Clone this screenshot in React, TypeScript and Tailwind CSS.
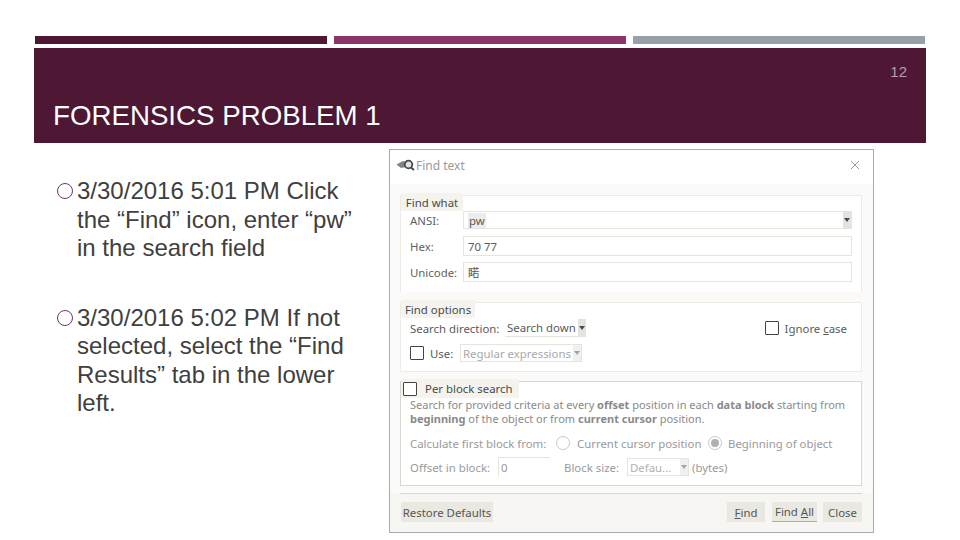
import React from "react";

const body = "font-['Liberation_Sans',Arial,sans-serif]";
const ui = "font-['Noto_Sans','Noto_Sans_CJK_SC',sans-serif]";

function Bullet({ lines }: { lines: string[] }) {
  return (
    <div className="relative pl-[43px] text-[24px] leading-[28.5px] text-[#404040]">
      <span className="absolute left-[23px] top-[6px] h-[16px] w-[16px] rounded-full border-[1.5px] border-[#6f3a60]" />
      {lines.map((l, i) => (
        <div key={i} className="whitespace-nowrap">
          {l}
        </div>
      ))}
    </div>
  );
}

function Arrow({ dim }: { dim?: boolean }) {
  return (
    <span className={`flex h-full w-[8px] shrink-0 items-center justify-center bg-[#e4e3de] ${dim ? "opacity-50" : ""}`}>
      <span className="h-0 w-0 border-x-[3px] border-t-[4px] border-x-transparent border-t-[#4a4a4a]" />
    </span>
  );
}

function Box() {
  return <span className="h-[14px] w-[14px] shrink-0 rounded-[1px] border border-[#444] bg-white" />;
}

function FieldRow({ label, value, h, arrow, mt }: { label: string; value: string; h: string; arrow?: boolean; mt: string }) {
  return (
    <div className={`flex items-center ${mt}`}>
      <span className="w-[62px] pl-[9px] text-[#5f5f5f]">{label}</span>
      <div className={`flex w-[389px] items-center justify-between border border-[#e6e5dd] bg-white pl-[4px] ${h}`}>
        {arrow ? <span className="bg-[#ececec] px-px text-[#5a5a5a]">{value}</span> : <span className="text-[#5a5a5a]">{value}</span>}
        {arrow && <Arrow />}
      </div>
    </div>
  );
}

function Btn({ children, w, className = "" }: { children: React.ReactNode; w: string; className?: string }) {
  return (
    <span className={`flex h-[20px] items-center justify-center bg-[#e9e8e1] text-[#555] ${w} ${className}`}>{children}</span>
  );
}

export default function App() {
  return (
    <div className={`h-[540px] w-[960px] overflow-hidden bg-white pt-[36px] ${body}`}>
      <div className="flex gap-[7px] pl-[35px]">
        <div className="h-[8px] w-[292px] bg-[#4e1733]" />
        <div className="h-[8px] w-[292px] bg-[#8a3567]" />
        <div className="h-[8px] w-[292px] bg-[#98a1a8]" />
      </div>

      <div className="ml-[34px] mt-[4px] flex h-[95px] w-[892px] flex-col bg-[#4e1733] pl-[19px] pr-[19px]">
        <div className="pt-[15px] text-right text-[15px] leading-[17px] text-[#b79db0]">12</div>
        <div className="mt-[21px] whitespace-nowrap text-[27.7px] leading-[30px] text-white">FORENSICS PROBLEM 1</div>
      </div>

      <div className="flex pl-[34px] pt-[6px]">
        <div className="w-[355px] pt-[28px]">
          <Bullet lines={["3/30/2016 5:01 PM Click", "the “Find” icon, enter “pw”", "in the search field"]} />
          <div className="h-[41px]" />
          <Bullet lines={["3/30/2016 5:02 PM If not", "selected, select the “Find", "Results” tab in the lower", "left."]} />
        </div>

        {/* dialog */}
        <div className={`h-[384px] w-[485px] border border-[#aaaaaa] bg-[#f7f6f2] text-[11.4px] leading-[15px] ${ui}`}>
          <div className="bg-white pb-[4px]">
            <div className="flex h-[30px] items-center justify-between pl-[6px] pr-[13px]">
              <div className="flex items-center gap-[1px]">
                <svg width="19" height="12" viewBox="0 0 19 12">
                  <path d="M0.5 5.5 L7 2 L10 3 L10 8 L5 9 Z" fill="#7d8387" />
                  <circle cx="12.5" cy="5.5" r="3.8" fill="#dfe3e5" stroke="#444a4d" strokeWidth="1.8" />
                  <path d="M15 8.5 L18 11" stroke="#444a4d" strokeWidth="2" />
                </svg>
                <span className="text-[12px] text-[#9a9a9a]">Find text</span>
              </div>
              <svg width="10" height="10" viewBox="0 0 10 10" stroke="#8f8f8f" strokeWidth="0.9">
                <path d="M1 1 L9 9 M9 1 L1 9" />
              </svg>
            </div>
          </div>

          <div className="bg-[#fbfaf8] px-[10px] pb-[7px] pt-[1px]">
            {/* Find what */}
            <div className="mt-[10px] h-[97px] w-[462px] border-x border-t border-[#ecebe4] bg-white">
              <div className="-mt-[3px] flex h-[18px] w-[62px] items-center justify-center bg-[#f4f3ee] text-[#4a4a4a]">Find what</div>
              <FieldRow label="ANSI:" value="pw" h="h-[18px]" arrow mt="mt-0" />
              <FieldRow label="Hex:" value="70 77" h="h-[20px]" mt="mt-[7px]" />
              <FieldRow label="Unicode:" value="睰" h="h-[20px]" mt="mt-[6px]" />
            </div>

            {/* Find options */}
            <div className="mt-[10px] h-[70px] w-[462px] border border-[#ecebe4] bg-white">
              <div className="-mt-[3px] flex h-[18px] w-[74px] items-center justify-center bg-[#f4f3ee] text-[#4a4a4a]">Find options</div>
              <div className="mt-[1px] flex h-[18px] items-center pl-[9px] pr-[14px] text-[#5a5a5a]">
                <span className="w-[95px]">Search direction:</span>
                <div className="flex h-[18px] items-center gap-[2px] border-b border-[#e6e5dd] pl-[2px]">
                  <span>Search down</span>
                  <Arrow />
                </div>
                <div className="ml-auto flex items-center gap-[6px]">
                  <Box />
                  <span>Ignore <u>c</u>ase</span>
                </div>
              </div>
              <div className="mt-[7px] flex h-[18px] items-center pl-[9px] text-[#5a5a5a]">
                <Box />
                <span className="ml-[6px] w-[30px]">Use:</span>
                <div className="flex h-[18px] items-center gap-[2px] border border-[#e6e5dd] pl-[2px]">
                  <span className="text-[#a8a8a8]">Regular expressions</span>
                  <Arrow dim />
                </div>
              </div>
            </div>

            {/* Per block search */}
            <div className="mt-[9px] h-[105px] w-[462px] border border-[#d9d8d0] bg-white">
              <div className="-mt-[3px] flex h-[19px] w-[118px] items-center bg-[#f4f3ee] pl-[2px] text-[#4a4a4a]">
                <Box />
                <span className="ml-[8px]">Per block search</span>
              </div>
              <div className="whitespace-nowrap pl-[9px] text-[11px] leading-[14px] text-[#8a8a8a]">
                <div>Search for provided criteria at every <b>offset</b> position in each <b>data block</b> starting from</div>
                <div><b>beginning</b> of the object or from <b>current cursor</b> position.</div>
              </div>
              <div className="mt-[9px] flex h-[16px] items-center pl-[9px] text-[#9a9a9a]">
                <span className="w-[146px]">Calculate first block from:</span>
                <span className="h-[14px] w-[14px] rounded-full border border-[#c8c8c8]" />
                <span className="ml-[7px] w-[131px]">Current cursor position</span>
                <span className="flex h-[14px] w-[14px] items-center justify-center rounded-full border border-[#c8c8c8]">
                  <span className="h-[8px] w-[8px] rounded-full bg-[#b0b0b0]" />
                </span>
                <span className="ml-[6px]">Beginning of object</span>
              </div>
              <div className="mt-[6px] flex h-[20px] items-center pl-[9px] text-[#9a9a9a]">
                <span className="w-[88px]">Offset in block:</span>
                <div className="flex h-[20px] w-[52px] items-center border-l border-t border-[#e6e5dd] pl-[2px]">0</div>
                <span className="ml-[14px] w-[63px]">Block size:</span>
                <div className="flex h-[18px] w-[62px] items-center justify-between border border-[#e6e5dd] pl-[2px]">
                  <span className="text-[#b0b0b0]">Defau...</span>
                  <Arrow dim />
                </div>
                <span className="ml-[3px]">(bytes)</span>
              </div>
            </div>
          </div>

          {/* footer */}
          <div className="mx-[10px] h-px w-[462px] bg-[#d9d8d0]" />
          <div className="mt-[8px] flex px-[11px]">
            <Btn w="w-[92px]">Restore Defaults</Btn>
            <div className="ml-auto flex gap-[7px]">
              <Btn w="w-[38px]"><span><u>F</u>ind</span></Btn>
              <Btn w="w-[45px]" className="border-b border-[#d8a08a]"><span>Find <u>A</u>ll</span></Btn>
              <Btn w="w-[39px]" className="-ml-px">Close</Btn>
            </div>
          </div>
        </div>
      </div>
    </div>
  );
}
